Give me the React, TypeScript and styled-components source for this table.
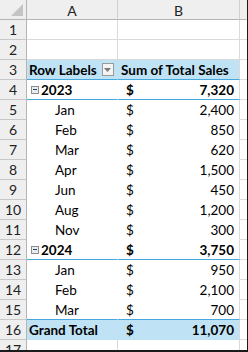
import { FC } from "react";
import styled, { createGlobalStyle } from "styled-components";

const GlobalStyle = createGlobalStyle`
	html, body {
		margin: 0;
		padding: 0;
		background: #ffffff;
	}
	body {
		font-family: Lato, "Liberation Sans", sans-serif;
		color: #000000;
	}
`;

const BLUE_FILL = "#bfe3f5";
const BLUE_LINE = "#45a8de";
const GRID = "#dadada";
const HEAD_BG = "#efefef";
const HEAD_LINE = "#b4b4b4";

type Kind = "blank" | "header" | "group" | "item" | "total";

interface Row {
	num: number;
	kind: Kind;
	label?: string;
	value?: string;
}

const rows: Row[] = [
	{ num: 1, kind: "blank" },
	{ num: 2, kind: "blank" },
	{ num: 3, kind: "header", label: "Row Labels", value: "Sum of Total Sales" },
	{ num: 4, kind: "group", label: "2023", value: "7,320" },
	{ num: 5, kind: "item", label: "Jan", value: "2,400" },
	{ num: 6, kind: "item", label: "Feb", value: "850" },
	{ num: 7, kind: "item", label: "Mar", value: "620" },
	{ num: 8, kind: "item", label: "Apr", value: "1,500" },
	{ num: 9, kind: "item", label: "Jun", value: "450" },
	{ num: 10, kind: "item", label: "Aug", value: "1,200" },
	{ num: 11, kind: "item", label: "Nov", value: "300" },
	{ num: 12, kind: "group", label: "2024", value: "3,750" },
	{ num: 13, kind: "item", label: "Jan", value: "950" },
	{ num: 14, kind: "item", label: "Feb", value: "2,100" },
	{ num: 15, kind: "item", label: "Mar", value: "700" },
	{ num: 16, kind: "total", label: "Grand Total", value: "11,070" },
];

// which pivot rows carry the blue rule underneath
const ruledBelow = (r: Row, next?: Row) =>
	r.kind === "header" || r.kind === "group" || next?.kind === "total";

const App: FC = () => {
	return (
		<>
			<GlobalStyle />
			<Frame>
				<Sheet>
					<Corner>
						<CornerTriangle />
					</Corner>
					<ColHead>A</ColHead>
					<ColHead>B</ColHead>
					<ColHead $last />

					{rows.map((r, i) => {
						const inPivot = r.kind !== "blank";
						const fill = r.kind === "header" || r.kind === "total";
						const bold = r.kind !== "item";
						const rule = ruledBelow(r, rows[i + 1]);
						return (
							<RowWrap key={r.num}>
								<RowHead>{r.num}</RowHead>
								<LabelCell $pivot={inPivot} $fill={fill} $rule={rule} $bold={bold}>
									{r.kind === "group" && <Collapse />}
									{r.kind === "item" ? <Indent>{r.label}</Indent> : r.label}
									{r.kind === "header" && (
										<FilterButton>
											<svg width="7" height="4" viewBox="0 0 7 4">
												<path d="M0 0H7L3.5 4Z" fill="#7a7a7a" />
											</svg>
										</FilterButton>
									)}
								</LabelCell>
								<ValueCell
									$pivot={inPivot}
									$fill={fill}
									$rule={rule}
									$bold={bold}
									$heading={r.kind === "header"}
								>
									{r.kind === "header" ? (
										<span>{r.value}</span>
									) : inPivot ? (
										<>
											<span>$</span>
											<span>{r.value}</span>
										</>
									) : null}
								</ValueCell>
								<SpareCell />
							</RowWrap>
						);
					})}

					<RowWrap>
						<RowHead $cut>17</RowHead>
						<LabelCell />
						<ValueCell />
						<SpareCell />
					</RowWrap>
				</Sheet>
			</Frame>
		</>
	);
};

const Frame = styled.div`
	width: 248px;
	height: 352px;
	box-sizing: border-box;
	border-right: 1px solid #1a1a1a;
	border-bottom: 2px solid #1a1a1a;
	overflow: hidden;
`;

const Sheet = styled.div`
	display: grid;
	grid-template-columns: 27px 91px 122px 7px;
	grid-auto-rows: 20px;
	font-size: 13.5px;
`;

const RowWrap = styled.div`
	display: contents;
`;

const Corner = styled.div`
	position: relative;
	background: ${HEAD_BG};
	border-right: 1px solid ${HEAD_LINE};
	border-bottom: 1px solid ${HEAD_LINE};
	box-sizing: border-box;
`;

const CornerTriangle = styled.div`
	position: absolute;
	right: 3px;
	bottom: 3px;
	width: 0;
	height: 0;
	border-left: 12px solid transparent;
	border-bottom: 12px solid #c4c4c4;
`;

const ColHead = styled.div<{ $last?: boolean }>`
	display: flex;
	align-items: center;
	justify-content: center;
	background: ${HEAD_BG};
	border-right: 1px solid ${(p) => (p.$last ? "transparent" : "#d0d0d0")};
	border-bottom: 1px solid ${HEAD_LINE};
	box-sizing: border-box;
	font-size: 14px;
	color: #222222;
	padding-top: 1px;
`;

const RowHead = styled.div<{ $cut?: boolean }>`
	display: flex;
	align-items: ${(p) => (p.$cut ? "flex-start" : "center")};
	justify-content: center;
	background: ${HEAD_BG};
	border-right: 1px solid ${HEAD_LINE};
	border-bottom: 1px solid #c8c8c8;
	box-sizing: border-box;
	font-size: 14px;
	line-height: 14px;
	color: #222222;
	padding-top: ${(p) => (p.$cut ? "3px" : "1px")};
`;

interface CellProps {
	$pivot?: boolean;
	$fill?: boolean;
	$rule?: boolean;
	$bold?: boolean;
	$heading?: boolean;
}

const BaseCell = styled.div<CellProps>`
	display: flex;
	align-items: flex-end;
	box-sizing: border-box;
	padding-bottom: 1px;
	white-space: nowrap;
	overflow: hidden;
	background: ${(p) => (p.$fill ? BLUE_FILL : "#ffffff")};
	font-weight: ${(p) => (p.$bold ? 700 : 400)};
	border-bottom: 1px solid
		${(p) => (p.$rule ? BLUE_LINE : p.$pivot ? (p.$fill ? BLUE_FILL : "#ffffff") : GRID)};
`;

const LabelCell = styled(BaseCell)`
	padding-left: 2px;
	border-right: 1px solid ${(p) => (p.$pivot ? (p.$fill ? BLUE_FILL : "#ffffff") : GRID)};
`;

const ValueCell = styled(BaseCell)`
	justify-content: space-between;
	padding-left: ${(p) => (p.$heading ? "3px" : "8px")};
	padding-right: 5px;
	border-right: 1px solid ${GRID};
`;

const SpareCell = styled.div`
	border-bottom: 1px solid ${GRID};
	box-sizing: border-box;
`;

const Indent = styled.span`
	padding-left: 26px;
`;

const Collapse = styled.span`
	position: relative;
	width: 8px;
	height: 8px;
	margin: 0 2px 4px 2px;
	box-sizing: border-box;
	border: 1px solid #8c8c8c;
	background: #e6ecf2;
	flex-shrink: 0;

	&::after {
		content: "";
		position: absolute;
		left: 1px;
		right: 1px;
		top: 2px;
		height: 1px;
		background: #3c3c3c;
	}
`;

const FilterButton = styled.span`
	display: flex;
	align-items: center;
	justify-content: center;
	width: 12px;
	height: 13px;
	margin-left: 5px;
	margin-bottom: 2px;
	box-sizing: border-box;
	border: 1px solid #9a9a9a;
	background: #f4f4f4;
	flex-shrink: 0;
`;

export default App;
